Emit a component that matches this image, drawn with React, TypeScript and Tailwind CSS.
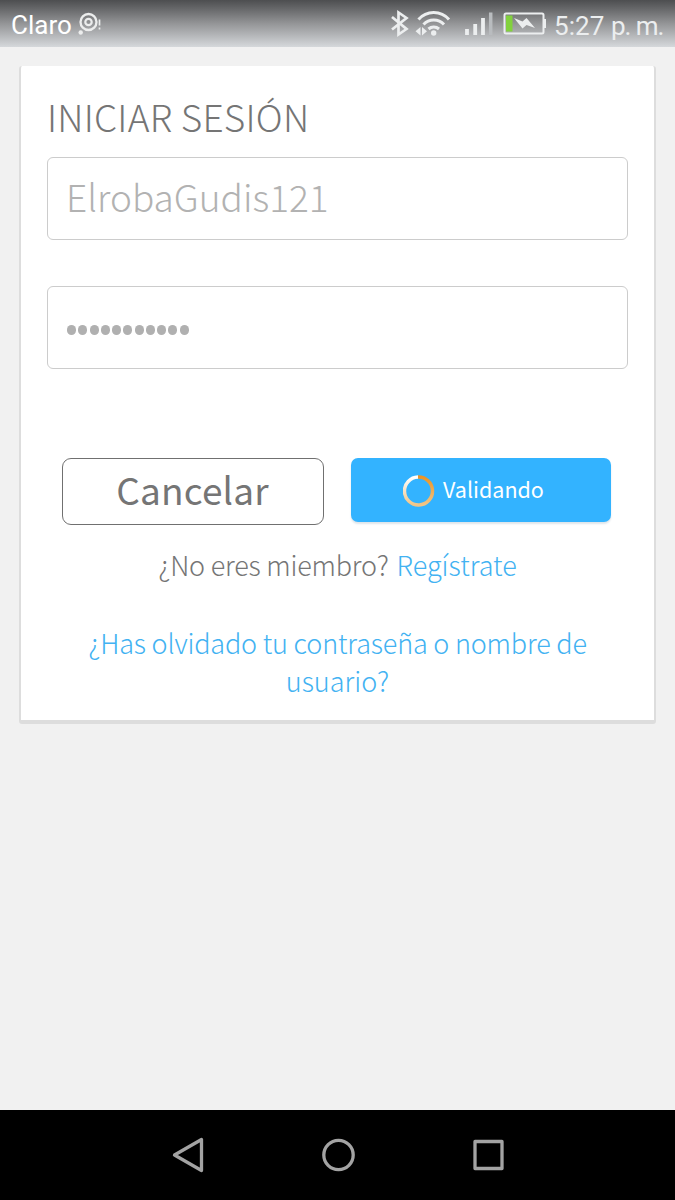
const PASSWORD_LENGTH = 11;

const StatusBar = () => (
  <header className="h-[47px] flex items-center bg-linear-to-b from-[#4d4e50] via-[#949597] to-[#d5d8db] font-[Roboto,sans-serif] text-white">
    <span className="ml-[11px] mt-[3px] w-[67px] text-[26px] leading-none">Claro</span>
    <svg className="w-6 h-6" viewBox="0 0 24 24" fill="none" stroke="#eceded">
      <circle cx="10.5" cy="10" r="8" strokeWidth="2.3" />
      <circle cx="10.5" cy="10" r="3.2" strokeWidth="2.2" />
      <circle cx="2.7" cy="20.5" r="2.2" fill="#eceded" stroke="none" />
      <path d="M21.5 7.5v6M21.5 15.5v2" strokeWidth="1.7" />
    </svg>
    <svg className="ml-[287px] w-[160px] h-[47px]" viewBox="389 0 160 47" fill="none" stroke="#eceeef">
      <path d="M392 17l14.5 12-8 5.500V12.500l8 5.500L392 29.500" strokeWidth="2.700" />
      <path d="M418.500 19.500a20 20 0 0 1 30.500 0M423.500 24.500a14 14 0 0 1 20.500 0M428.500 29a8 8 0 0 1 10.500 0" strokeWidth="3" />
      <circle cx="433.700" cy="33" r="2.700" fill="#eceeef" stroke="none" />
      <path d="M420.500 27v8.500l-5-4.200zM422 27v8.500l5-4.200z" fill="#eceeef" stroke="none" />
      <path d="M467 35v-6M475.200 35V24M483 35V18" strokeWidth="3.800" />
      <path d="M490.700 35V12.500" stroke="#b9bcbf" strokeWidth="3.500" />
      <rect x="504.500" y="13.500" width="39" height="20" rx="1.500" strokeWidth="2" />
      <path d="M545 19v9" strokeWidth="2" />
      <path d="M506 15.500h6.500v16H506z" fill="#82d13d" stroke="none" />
      <path d="M514 18l8.500 3.500 4-3.500 8.500 10-8.500-3-4 3.500z" fill="#eceeef" stroke="none" />
    </svg>
    <span className="ml-[5px] mt-[4px] text-[26px] leading-none text-[#eceeef] whitespace-nowrap tracking-[0.1px]">
      5:27 <span className="tracking-[-1.100px]">p. m.</span>
    </span>
  </header>
);

const LoginCard = () => (
  <main className="mx-[19px] mt-[19px] h-[658px] rounded-[3px] border-x-2 border-b-4 border-[#dddddd] bg-white px-[26px] text-[#757575]">
    <h1 className="pt-[22px] h-[91px] text-[37px] leading-[56px] font-light whitespace-nowrap tracking-[0.220px]">INICIAR SESIÓN</h1>
    <div className="h-[83px] rounded-md border border-[#cccccc] px-[18px] text-[37px] leading-[77px] font-light text-[#b2b2b2]">
      ElrobaGudis121
    </div>
    <div className="mt-[46px] h-[83px] flex items-center gap-[2.250px] rounded-md border border-[#cccccc] px-[19px] pt-1">
      {Array.from({ length: PASSWORD_LENGTH }, (_, i) => (
        <span key={i} className="w-[9px] h-[10px] rounded-full bg-[#b0b0b0]" />
      ))}
    </div>
    <div className="mt-[89px] ml-[15px] flex items-start">
      <button className="w-[262px] h-[67px] rounded-[9px] border border-[#707070] text-[37px] leading-[60px] pb-[5px] pr-[1px] tracking-[0.150px]">Cancelar</button>
      <button className="ml-[27px] w-[260px] h-[64px] flex items-center rounded-[7px] bg-[#33b3ff] pl-[52px] pt-px text-[21.500px] leading-none text-white shadow-[0_2px_2px_#dfe5ea]">
        <svg className="mr-[8px] size-8" viewBox="0 0 32 32" fill="none" strokeWidth="3.500">
          <defs>
            <linearGradient id="right" x1="0" y1="0" x2="0" y2="1">
              <stop stopColor="#ea9425" />
              <stop offset="1" stopColor="#f1c587" />
            </linearGradient>
            <linearGradient id="left" x1="0" y1="0" x2="0" y2="1">
              <stop stopColor="#ffffff" />
              <stop offset="1" stopColor="#f1c587" />
            </linearGradient>
          </defs>
          <path d="M15 2a14 14 0 0 1 1 28" stroke="url(#right)" />
          <path d="M15 2a14 14 0 0 0 1 28" stroke="url(#left)" />
        </svg>
        <span className="-mt-[3px]">Validando</span>
      </button>
    </div>
    <p className="mt-[20px] text-center text-[27px] leading-[39px] font-light whitespace-nowrap">
      <span className="tracking-[-0.200px]">¿No eres miembro? </span>
      <a className="ml-[2px] text-[#42b2f2]">Regístrate</a>
    </p>
    <p className="mt-[40px] text-center text-[27px] leading-[37.500px] font-light whitespace-nowrap text-[#42b2f2]">
      <span className="tracking-[-0.180px]">¿Has olvidado tu contraseña o nombre de</span>
      <br />
      usuario?
    </p>
  </main>
);

const NavBar = () => (
  <nav className="mt-auto h-[90px] bg-black">
    <svg className="w-full h-full" viewBox="0 1110 675 90" fill="none" stroke="#a3a3a3" strokeWidth="3.300" strokeLinejoin="round">
      <path d="M174.500 1155l27-15.500v31z" />
      <circle cx="338.500" cy="1155" r="14.700" />
      <rect x="475" y="1141.500" width="27" height="27" />
    </svg>
  </nav>
);

const App = () => (
  <div className="w-[675px] h-[1200px] flex flex-col overflow-hidden bg-[#f1f1f1] font-['Noto_Sans_CJK_SC',sans-serif]">
    <StatusBar />
    <LoginCard />
    <NavBar />
  </div>
);

export default App;
